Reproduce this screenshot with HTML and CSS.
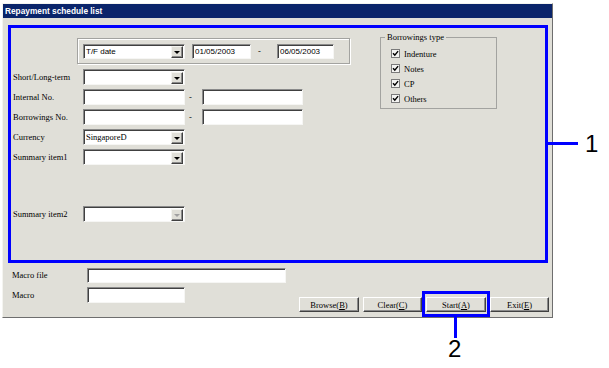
FILE: index.html
```html
<!DOCTYPE html>
<html lang="en">
<head>
    <meta charset="UTF-8">
    <title>Repayment schedule list</title>
    <link rel="stylesheet" href="styles.css">
</head>
<body>
    <div class="stage">
        <div class="window">
            <div class="titlebar">Repayment schedule list</div>

            <div class="criteria">
                <div class="left-col">
                    <div class="date-group">
                        <div class="field combo date-kind"><span>T/F date</span><span class="arrow"></span></div>
                        <div class="field date">01/05/2003</div>
                        <span class="dash">-</span>
                        <div class="field date date-to">06/05/2003</div>
                    </div>

                    <div class="rows">
                        <div class="row">
                            <span class="label">Short/Long-term</span>
                            <div class="field combo"><span></span><span class="arrow"></span></div>
                        </div>
                        <div class="row">
                            <span class="label">Internal No.</span>
                            <div class="field"></div>
                            <span class="row-dash">-</span>
                            <div class="field"></div>
                        </div>
                        <div class="row">
                            <span class="label">Borrowings No.</span>
                            <div class="field"></div>
                            <span class="row-dash">-</span>
                            <div class="field"></div>
                        </div>
                        <div class="row">
                            <span class="label">Currency</span>
                            <div class="field combo"><span>SingaporeD</span><span class="arrow"></span></div>
                        </div>
                        <div class="row">
                            <span class="label">Summary item1</span>
                            <div class="field combo"><span></span><span class="arrow"></span></div>
                        </div>
                        <div class="row spaced">
                            <span class="label">Summary item2</span>
                            <div class="field combo"><span></span><span class="arrow disabled"></span></div>
                        </div>
                    </div>
                </div>

                <fieldset class="types">
                    <legend>Borrowings type</legend>
                    <div class="check"><svg width="9" height="9" viewBox="0 0 9 9"><rect x="0.5" y="0.5" width="8" height="8" fill="#f4f4f2" stroke="#7a7a7a"/><path d="M2 4.2l1.8 1.9 3.3-4" fill="none" stroke="#000" stroke-width="1.4"/></svg><span>Indenture</span></div>
                    <div class="check"><svg width="9" height="9" viewBox="0 0 9 9"><rect x="0.5" y="0.5" width="8" height="8" fill="#f4f4f2" stroke="#7a7a7a"/><path d="M2 4.2l1.8 1.9 3.3-4" fill="none" stroke="#000" stroke-width="1.4"/></svg><span>Notes</span></div>
                    <div class="check"><svg width="9" height="9" viewBox="0 0 9 9"><rect x="0.5" y="0.5" width="8" height="8" fill="#f4f4f2" stroke="#7a7a7a"/><path d="M2 4.2l1.8 1.9 3.3-4" fill="none" stroke="#000" stroke-width="1.4"/></svg><span>CP</span></div>
                    <div class="check"><svg width="9" height="9" viewBox="0 0 9 9"><rect x="0.5" y="0.5" width="8" height="8" fill="#f4f4f2" stroke="#7a7a7a"/><path d="M2 4.2l1.8 1.9 3.3-4" fill="none" stroke="#000" stroke-width="1.4"/></svg><span>Others</span></div>
                </fieldset>
            </div>

            <div class="footer">
                <div class="macro">
                    <div class="macro-row">
                        <span class="label">Macro file</span>
                        <div class="field macro-file"></div>
                    </div>
                    <div class="macro-row">
                        <span class="label">Macro</span>
                        <div class="field macro-name"></div>
                    </div>
                </div>
                <div class="buttons">
                    <button>Browse(<u>B</u>)</button>
                    <button class="narrow">Clear(<u>C</u>)</button>
                    <button>Start(<u>A</u>)</button>
                    <button class="narrow">Exit(<u>E</u>)</button>
                </div>
            </div>
        </div>

        <!-- callouts -->
        <div class="mark-line-1"></div>
        <div class="mark-num mark-num-1">1</div>
        <div class="start-mark"></div>
        <div class="mark-line-2"></div>
        <div class="mark-num mark-num-2">2</div>
    </div>
</body>
</html>
```

FILE: styles.css
```css
body {
    margin: 0;
    background-color: #fff;
    font-family: "Liberation Serif", serif;
    font-size: 8.5px;
    color: #000;
}
.stage {
    position: relative;
    width: 609px;
    height: 368px;
    padding: 3px 0 0 2px;
    box-sizing: border-box;
}
.window {
    width: 551px;
    height: 315px;
    box-sizing: border-box;
    background-color: #e0dfd8;
    border: 1px solid;
    border-color: #f4f4f0 #6e6e6e #6e6e6e #f4f4f0;
    display: flex;
    flex-direction: column;
}
.titlebar {
    height: 14px;
    line-height: 14px;
    padding-left: 2px;
    background-color: #0a246a;
    color: #fff;
    font-family: "Liberation Sans", sans-serif;
    font-weight: bold;
    font-size: 8.3px;
}
.criteria {
    margin: 7px 0 0 5px;
    width: 540px;
    height: 238px;
    box-sizing: border-box;
    border: 3px solid #0000ff;
    display: flex;
}
.left-col {
    width: 340px;
    padding-top: 10px;
}
.date-group {
    margin-left: 66px;
    width: 273px;
    height: 26px;
    box-sizing: border-box;
    padding-left: 5px;
    border: 1px solid #a3a3a0;
    box-shadow: inset 1px 1px 0 #fff, 1px 1px 0 #fff;
    display: flex;
    align-items: center;
}
.field {
    height: 16px;
    box-sizing: border-box;
    background-color: #fff;
    border: 1px solid;
    border-color: #8a8a8a #f6f6f4 #f6f6f4 #8a8a8a;
    box-shadow: inset 1px 1px 0 #404040;
    padding: 1px 0 0 2px;
    line-height: 13px;
    white-space: nowrap;
    overflow: hidden;
}
.combo {
    width: 102px;
    display: flex;
    justify-content: space-between;
    align-items: center;
    padding: 1px 1px 0 2px;
}
.date-kind, .date {
    font-family: "Liberation Sans", sans-serif;
    font-size: 8px;
}
.date-kind {
    margin-right: 7px;
}
.date {
    width: 59px;
    height: 15px;
    line-height: 12px;
}
.date-kind {
    height: 15px;
}
.date-to {
    width: 57px;
}
.dash {
    width: 26px;
    padding-left: 7px;
    box-sizing: border-box;
}
.arrow {
    width: 12px;
    height: 12px;
    box-sizing: border-box;
    background-color: #e0dfd8;
    border: 1px solid;
    border-color: #f4f4f0 #404040 #404040 #f4f4f0;
    box-shadow: inset -1px -1px 0 #8a8a8a;
    display: flex;
    justify-content: center;
    align-items: center;
}
.arrow::after {
    content: "";
    border-left: 3px solid transparent;
    border-right: 3px solid transparent;
    border-top: 3px solid #000;
    margin-top: 1px;
}
.arrow.disabled::after {
    border-top-color: #a0a0a0;
}
.rows {
    margin-top: 5px;
    padding-left: 2px;
    display: flex;
    flex-direction: column;
    gap: 4px;
}
.row {
    display: grid;
    grid-template-columns: 70px 102px 17px 101px;
    height: 16px;
    align-items: center;
}
.row.spaced {
    margin-top: 37px;
}
.row-dash {
    padding-left: 4px;
}
.types {
    margin: 4px 0 0 29px;
    width: 117px;
    height: 77px;
    box-sizing: border-box;
    padding: 4px 0 0 10px;
    border: 1px solid #a3a3a0;
}
.types legend {
    margin-left: -6px;
    padding: 0 2px;
    line-height: 10px;
}
.check {
    height: 15px;
    display: flex;
    align-items: center;
    gap: 4px;
}
.check svg {
    display: block;
}
.footer {
    flex: 1;
    display: flex;
    padding: 4px 3px 5px 9px;
}
.macro {
    display: flex;
    flex-direction: column;
    gap: 4px;
}
.macro-row {
    display: flex;
    align-items: center;
    height: 16px;
}
.macro-row .label {
    width: 75px;
}
.macro-file {
    width: 199px;
    height: 15px;
}
.macro-name {
    width: 98px;
}
.buttons {
    margin-left: auto;
    align-self: flex-end;
    display: flex;
    gap: 4px;
}
button {
    width: 60px;
    height: 15px;
    padding: 0;
    box-sizing: border-box;
    background-color: #e0dfd8;
    border: 1px solid;
    border-color: #fff #404040 #404040 #fff;
    box-shadow: inset -1px -1px 0 #8a8a8a;
    font-family: "Liberation Serif", serif;
    font-size: 8.5px;
    line-height: 12px;
    color: #000;
}
button.narrow {
    width: 59px;
}
.start-mark {
    position: absolute;
    left: 422px;
    top: 291px;
    width: 68px;
    height: 26px;
    box-sizing: border-box;
    border: 3px solid #0000ff;
}
.mark-line-1 {
    position: absolute;
    left: 547px;
    top: 142px;
    width: 31px;
    height: 3px;
    background-color: #0000ff;
}
.mark-line-2 {
    position: absolute;
    left: 454px;
    top: 317px;
    width: 3px;
    height: 21px;
    background-color: #0000ff;
}
.mark-num {
    position: absolute;
    font-family: "Liberation Sans", sans-serif;
    font-size: 24px;
    line-height: 24px;
}
.mark-num-1 {
    left: 585px;
    top: 132px;
}
.mark-num-2 {
    left: 448px;
    top: 337px;
}
```
